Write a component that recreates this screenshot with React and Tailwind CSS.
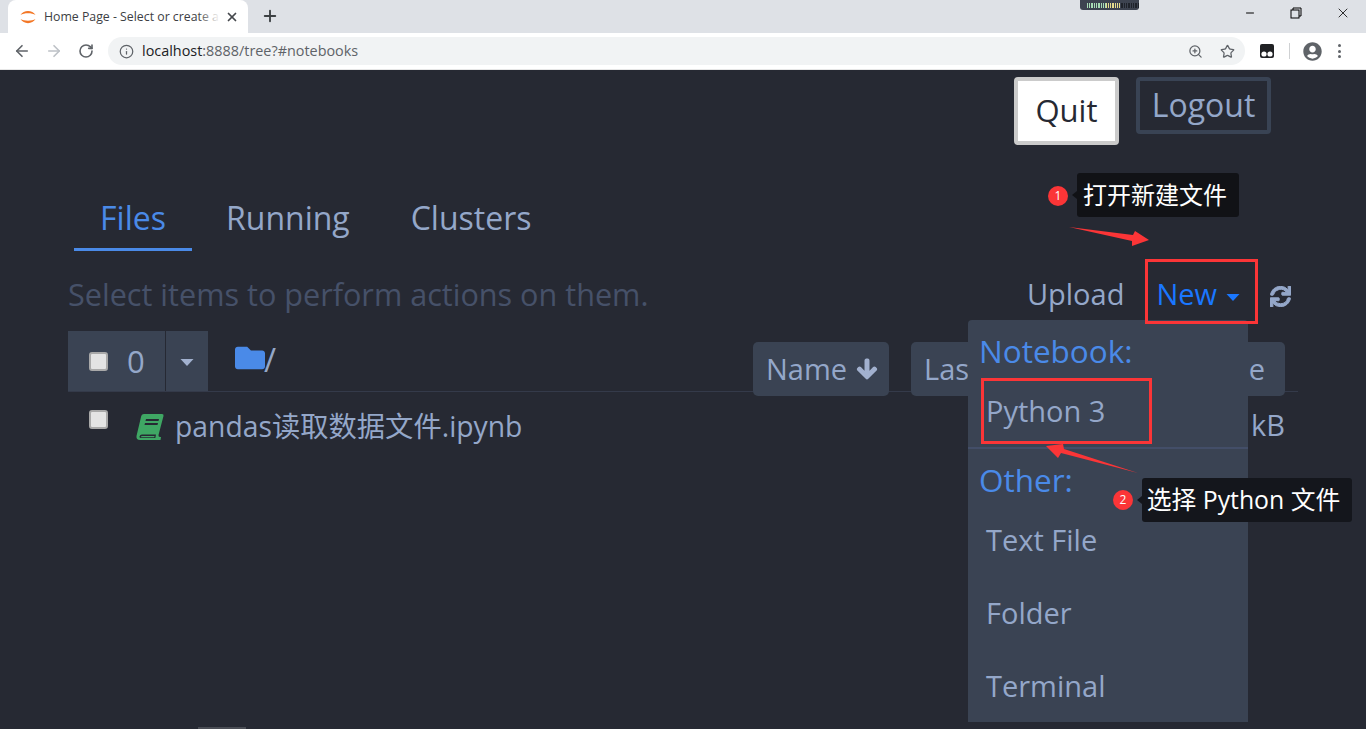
import React from 'react';
import { ArrowLeft, ArrowRight, RotateCw, Info, ZoomIn, Star, Plus, X, Minus } from 'lucide-react';
import { FaFolder, FaArrowDown, FaSync, FaUserCircle } from 'react-icons/fa';

const font = { fontFamily: '"Open Sans", "Noto Sans CJK SC", sans-serif' };

const Check = () => (
  <span className="block w-[19px] h-[19px] rounded-[3px] bg-[#e4e4e4] border-2 border-[#a9a9a9] shrink-0" />
);

const Caret = ({ className }) => (
  <svg width="14" height="7" viewBox="0 0 14 7" fill="currentColor" className={className}>
    <path d="M0.500 0 H13.500 L7 7Z" />
  </svg>
);

const BrowserChrome = () => (
  <div className="shrink-0">
    {/* tab strip */}
    <div className="h-[33px] bg-[#dee1e6] flex items-end relative">
      <div className="ml-[8px] w-[240px] h-[33px] bg-white rounded-t-lg flex items-center pl-[12px] text-[12.3px] text-[#3c4043] font-['Open_Sans'] relative">
        <svg width="16" height="16" viewBox="0 0 16 16" className="shrink-0">
          <path d="M0.500 6 C3.500 0.500 12.500 0.500 15.500 6 C12 3.800 4 3.800 0.500 6Z" fill="#f37726" />
          <path d="M0.500 10 C3.500 15.500 12.500 15.500 15.500 10 C12 12.200 4 12.200 0.500 10Z" fill="#f37726" />
        </svg>
        <span className="ml-[8px] pt-[2px] w-[176px] overflow-hidden whitespace-nowrap">Home Page - Select or create a</span>
        <span className="absolute left-[190px] top-[8px] w-[22px] h-[18px] bg-gradient-to-r from-transparent to-white" />
        <X size={14} strokeWidth={3} className="ml-[5px] text-[#45484c] shrink-0" />
      </div>
      <Plus size={18} strokeWidth={2.5} className="ml-[13px] mb-[8px] text-[#3c4043]" />
      {/* camera notch */}
      <div className="absolute left-[1080px] top-0 w-[59px] h-[10px] bg-[#3d4350] rounded-b-[3px] flex items-center pl-[7px] gap-[1px]">
        {Array.from({ length: 30 }).map((_, i) => (
          <span key={i} className={i < 11 ? 'w-[1px] h-[5px] bg-[#a7dcb5]' : i < 19 ? 'w-[1px] h-[5px] bg-[#e5dc8c]' : 'w-[1px] h-[5px] bg-[#1f232b]'} />
        ))}
      </div>
      {/* window buttons */}
      <div className="absolute right-0 top-0 h-[26px] flex items-center text-black">
        <Minus size={12} strokeWidth={2} className="mr-[34px]" />
        <svg width="12" height="12" viewBox="0 0 12 12" fill="none" stroke="#000" className="mr-[33px]">
          <rect x="1" y="3" width="8" height="8" />
          <path d="M3 3 V1 H11 V9 H9" />
        </svg>
        <X size={16} strokeWidth={1.2} className="mr-[15px]" />
      </div>
    </div>
    {/* address bar */}
    <div className="h-[37px] bg-white flex items-center border-b border-[#e6e6e6] relative">
      <ArrowLeft size={18} strokeWidth={2.2} className="ml-[13px] text-[#5f6368]" />
      <ArrowRight size={18} strokeWidth={2.2} className="ml-[14px] text-[#bdc1c6]" />
      <RotateCw size={16} strokeWidth={2.4} className="ml-[15px] text-[#5f6368]" />
      <div className="ml-[14px] w-[1137px] h-[28px] rounded-full bg-[#f1f3f4] flex items-center pl-[11px] pr-[10px] font-['Open_Sans'] text-[14.4px]">
        <Info size={15} strokeWidth={2} className="text-[#5f6368]" />
        <span className="ml-[8px] text-[#202124]">localhost</span>
        <span className="text-[#5f6368]">:8888/tree?#notebooks</span>
        <ZoomIn size={15} strokeWidth={2} className="ml-auto text-[#5f6368]" />
        <Star size={15} strokeWidth={2} className="ml-[17px] text-[#5f6368]" />
      </div>
      <svg width="14" height="14" viewBox="0 0 14 14" className="ml-[15px]">
        <rect x="0" y="0" width="14" height="14" rx="2" fill="#202124" />
        <circle cx="4" cy="10" r="2.600" fill="#fff" />
        <circle cx="10" cy="10" r="2.600" fill="#fff" />
      </svg>
      <span className="ml-[15px] w-[1px] h-[16px] bg-[#cfd1d3]" />
      <FaUserCircle size={19} className="ml-[13px] text-[#5f6368]" />
      <span className="ml-[16px] flex flex-col gap-[2.500px]">
        <i className="block w-[3px] h-[3px] rounded-full bg-[#5f6368]" />
        <i className="block w-[3px] h-[3px] rounded-full bg-[#5f6368]" />
        <i className="block w-[3px] h-[3px] rounded-full bg-[#5f6368]" />
      </span>
    </div>
  </div>
);

const MenuItem = ({ children }) => (
  <div className="pl-[18px] h-[73px] flex items-center">{children}</div>
);

const App = () => {
  return (
    <div className="h-[729px] w-[1366px] overflow-hidden flex flex-col bg-[#262933] relative" style={font}>
      <BrowserChrome />

      <div className="flex-1 text-[29px] text-[#94a7c9] relative">
        {/* top buttons */}
        <div className="flex justify-end items-start pt-[7px] pr-[95px] gap-[17px]">
          <button className="w-[105px] h-[68px] bg-white border-[4px] border-[#cbcbcb] rounded-[4px] text-[31px] text-[#262933] pb-[2px]">Quit</button>
          <button className="w-[135px] h-[57px] border-[4px] border-[#394354] rounded-[4px] text-[32px] pb-[3px]">Logout</button>
        </div>

        {/* tabs */}
        <div className="flex gap-[7px] ml-[74px] mt-[43px] text-[32px]">
          <div className="w-[118px] justify-center h-[63px] flex items-center border-b-[3px] border-[#4a8ae8] text-[#4a8ae8]">Files</div>
          <div className="px-[27px] h-[63px] flex items-center border-b-[3px] border-transparent">Running</div>
          <div className="px-[27px] h-[63px] flex items-center border-b-[3px] border-transparent">Clusters</div>
        </div>

        {/* toolbar */}
        <div className="flex items-center ml-[68px] mr-[75px] mt-[8px] h-[72px]">
          <span className="text-[30.6px] text-[#465169]">Select items to perform actions on them.</span>
          <span className="ml-auto pb-[2px]">Upload</span>
          <span className="ml-[32px] pb-[2px] text-[#1a77ff] flex items-center">New<Caret className="ml-[9px] mt-[6px]" /></span>
          <FaSync size={21} className="ml-[30px] mt-[2px]" stroke="currentColor" strokeWidth={24} />
        </div>

        {/* list header */}
        <div className="ml-[68px] w-[1230px] h-[61px] border-b border-[#343a4a] flex">
          <div className="flex h-[60px] bg-[#3a4353]">
            <div className="w-[98px] flex items-center pl-[21px] gap-[19px] border-r border-[#262933]">
              <Check />
              <span className="text-[31px]">0</span>
            </div>
            <div className="w-[42px] flex items-center justify-center text-[#a2b1cf]">
              <Caret className="mt-[2px]" />
            </div>
          </div>
          <div className="ml-[27px] h-[60px] flex items-center pb-[6px]">
            <FaFolder size={30} className="text-[#4a8ae8]" />
            <span className="-ml-[1px] mt-[3px] text-[33px]">/</span>
          </div>
          <div className="ml-auto mr-[13px] mt-[11px] h-[54px] flex gap-[22px]">
            <div className="w-[136px] h-[54px] bg-[#3a4353] rounded-[5px] flex items-center pl-[13px]">
              Name<FaArrowDown size={22} className="ml-[9px] text-[#a2b1cf]" stroke="currentColor" strokeWidth={36} />
            </div>
            <div className="w-[374px] h-[54px] bg-[#3a4353] rounded-[5px] flex items-center justify-between pl-[13px] pr-[20px]">
              <span>Last Modified</span>
              <span>File size</span>
            </div>
          </div>
        </div>

        {/* file row */}
        <div className="ml-[89px] mr-[81px] flex items-start">
          <span className="mt-[18px]"><Check /></span>
          <svg width="28" height="26" viewBox="0 0 28 26" className="ml-[28px] mt-[22px] shrink-0">
            <path d="M8 0 H26 Q28 0 27.500 2 L22.500 21 Q22.200 23 24 23 H25 L24.500 26 H4 Q0 26 0.500 22 L5 3 Q5.500 0 8 0Z" fill="#3fa764" />
            <path d="M3.500 22.500 Q4 20.500 6 20.500 H20 L19.300 24 H6 Q3.200 24 3.500 22.500Z" fill="#262933" />
            <path d="M4.800 23 Q5 22 6.500 22 H18.500 L18.200 23.200 H6 Q4.800 23.200 4.800 23Z" fill="#3fa764" />
            <path d="M10 5 H23 L22.500 7 H9.500Z M9 9 H22 L21.500 11 H8.500Z" fill="#262933" />
          </svg>
          <span className="ml-[11px] mt-[13px] text-[28.300px]">pandas读取数据文件.ipynb</span>
          <span className="ml-auto mt-[11px]">32 kB</span>
        </div>

        {/* open New dropdown */}
        <div className="absolute left-[968px] top-[250px] w-[280px] h-[402px] bg-[#3a4353] rounded-t-[4px]">
          <div className="pl-[11px] h-[64px] flex items-center pb-[3px] text-[31.500px] text-[#4a8ae8]">Notebook:</div>
          <div className="pl-[18px] h-[63px] pb-[9px] flex items-center">Python 3</div>
          <div className="h-[2px] bg-[#434e68]" />
          <div className="pl-[11px] h-[62px] flex items-center text-[31.500px] text-[#4a8ae8]">Other:</div>
          <div className="-mt-[8px]">
            <MenuItem>Text File</MenuItem>
            <MenuItem>Folder</MenuItem>
            <MenuItem>Terminal</MenuItem>
          </div>
        </div>

        {/* annotations laid over the page */}
        <div className="absolute left-[1145px] top-[189px] w-[113px] h-[65px] border-[3px] border-[#fb3537]" />
        <div className="absolute left-[981px] top-[308px] w-[171px] h-[66px] border-[3px] border-[#fb3537]" />

        <div className="absolute left-[1048px] top-[116px] w-[20px] h-[20px] rounded-full bg-[#fb3537] text-white text-[12px] flex items-center justify-center">1</div>
        <div className="absolute left-[1077px] top-[103px] w-[162px] h-[44px] bg-[#111216] rounded-[3px] text-white text-[24px] flex items-center justify-center pr-[6px]">打开新建文件</div>
        <div className="absolute left-[1113px] top-[420px] w-[20px] h-[20px] rounded-full bg-[#fb3537] text-white text-[12px] flex items-center justify-center">2</div>
        <div className="absolute left-[1142px] top-[408px] w-[210px] h-[44px] bg-[#14161c] rounded-[3px] text-white text-[24.800px] flex items-center justify-center whitespace-nowrap pr-[7px]">选择 Python 文件</div>

        <svg className="absolute left-0 top-0" width="1366" height="659" viewBox="0 70 1366 659">
          <path d="M1069 227 L1133 235 L1135 231 L1149 240 L1132 246 L1132 241Z" fill="#fb3537" />
          <path d="M1138 473 L1064 449 L1063 444 L1046 446 L1058 458 L1061 453Z" fill="#fb3537" />
          <path d="M1072 195 L1077 191 L1077 199Z" fill="#111216" />
          <path d="M1137 500 L1142 496 L1142 504Z" fill="#14161c" />
        </svg>

        {/* scrollbar sliver at the very bottom */}
        <div className="absolute left-[198px] bottom-0 w-[48px] h-[2px] bg-[#4a4d55]" />
      </div>
    </div>
  );
};

export default App;
